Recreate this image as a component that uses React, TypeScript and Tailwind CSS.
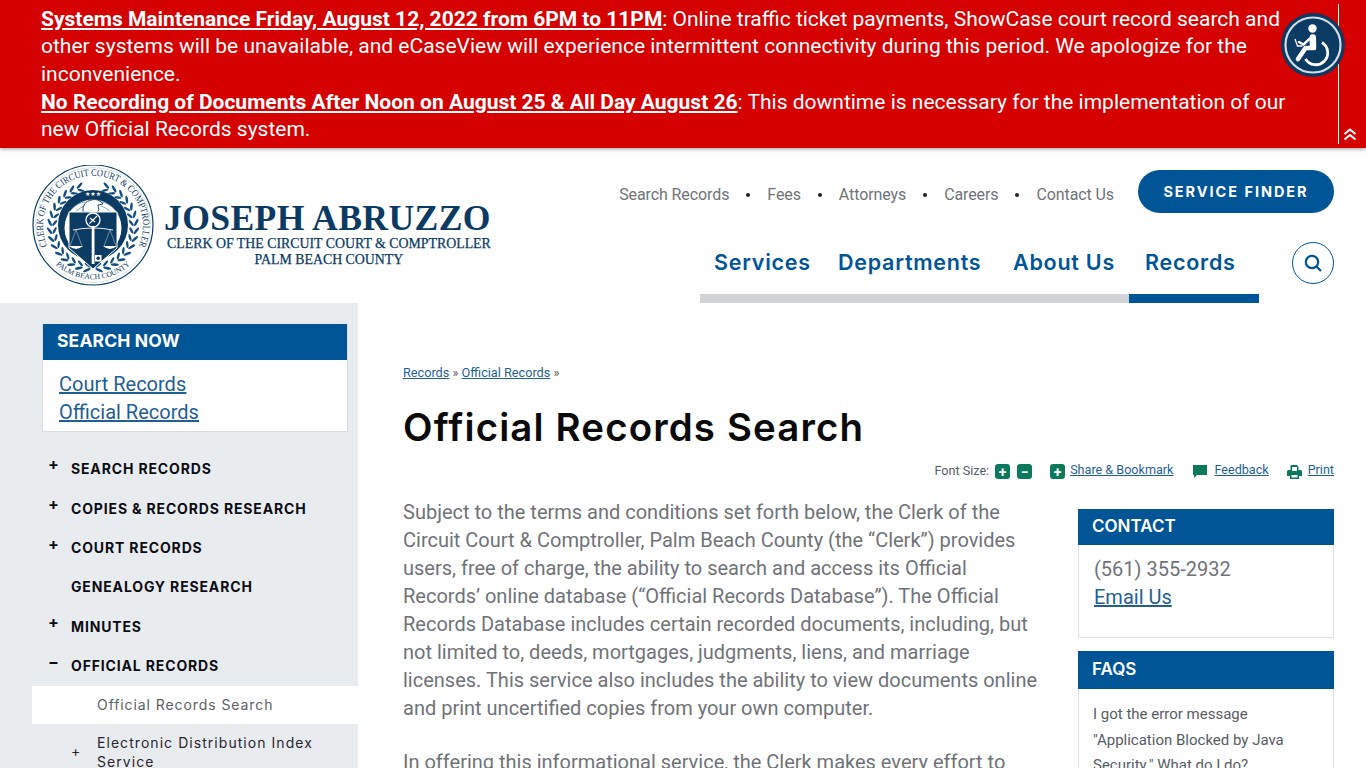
import React from 'react';

const sideItems = [
  { label: 'SEARCH RECORDS', mark: '+', h: 'h-[40px]' },
  { label: 'COPIES & RECORDS RESEARCH', mark: '+', h: 'h-[40px]' },
  { label: 'COURT RECORDS', mark: '+', h: 'h-[38px]' },
  { label: 'GENEALOGY RESEARCH', mark: '', h: 'h-[40px]' },
  { label: 'MINUTES', mark: '+', h: 'h-[40px]' },
  { label: 'OFFICIAL RECORDS', mark: '−', h: 'h-[38px]' },
];

const topLinks = ['Search Records', 'Fees', 'Attorneys', 'Careers', 'Contact Us'];

// wreath leaves, from the bottom of the seal up one side (mirrored for the other)
const leaves = Array.from({ length: 15 }, (_, i) => 8 + i * 11);

function Wreath() {
  return (
    <g fill="#14507f">
      {leaves.map((t) => {
        const rad = (t * Math.PI) / 180;
        const pos = (r: number) => [61 + r * Math.sin(rad), 62 + r * Math.cos(rad)];
        const [ox, oy] = pos(43.5);
        const [ix, iy] = pos(38.5);
        return (
          <g key={t}>
            <ellipse cx={ox} cy={oy} rx="4" ry="1.3" transform={`rotate(${-t + 32} ${ox} ${oy})`} />
            <ellipse cx={ix} cy={iy} rx="3.6" ry="1.2" transform={`rotate(${-t - 32} ${ix} ${iy})`} />
          </g>
        );
      })}
    </g>
  );
}

function Seal() {
  return (
    <svg width="124" height="122" viewBox="0 0 124 122" className="shrink-0">
      <defs>
        <path id="sealTop" d="M 15.5 81.5 A 50 50 0 1 1 106.5 81.5" />
        <path id="sealBottom" d="M 22 98 A 55 55 0 0 0 100 98" />
      </defs>
      <circle cx="61" cy="60" r="60" fill="#fff" stroke="#0b3a63" strokeWidth="1.2" />
      <circle cx="61" cy="60" r="57.5" fill="none" stroke="#b9c8d6" strokeWidth="0.5" />
      <text fontFamily="'Liberation Serif', serif" fontSize="9.8" fill="#0b3a63">
        <textPath href="#sealTop" startOffset="50%" textAnchor="middle" textLength="198" lengthAdjust="spacingAndGlyphs">CLERK OF THE CIRCUIT COURT &amp; COMPTROLLER</textPath>
      </text>
      <text fontFamily="'Liberation Serif', serif" fontSize="7.6" fill="#0b3a63">
        <textPath href="#sealBottom" startOffset="50%" textAnchor="middle">PALM BEACH COUNTY</textPath>
      </text>
      <Wreath />
      <g transform="translate(122 0) scale(-1 1)">
        <Wreath />
      </g>
      <circle cx="61" cy="60" r="35" fill="#0b3a63" />
      <circle cx="61" cy="63" r="28.5" fill="#fff" />
      {/* wing feathers */}
      <path d="M35 50 Q43 38 53 37 M38 54 Q45 43 53 41 M87 50 Q79 38 69 37 M84 54 Q77 43 69 41" stroke="#6f8ea8" strokeWidth="0.8" fill="none" />
      {/* eagle */}
      <path d="M51 47 Q50 37 59 35 Q67 33 71 39 L66 40 Q68 45 65 48 Z" fill="#fff" stroke="#0b3a63" strokeWidth="0.9" />
      {/* stars */}
      <text x="61" y="31" textAnchor="middle" fontSize="6" fill="#fff" fontFamily="'DejaVu Sans', sans-serif">★★★</text>
      {/* shield */}
      <path d="M37 47 H85 V83 L61 104 L37 83 Z" fill="#0b3a63" stroke="#fff" strokeWidth="1" />
      <circle cx="61" cy="55" r="7" fill="none" stroke="#fff" strokeWidth="1.3" />
      <path d="M57.5 58.5 L65 51 M58 53 L63 57" stroke="#fff" strokeWidth="1.1" />
      <path d="M41 65 Q61 61 81 65" stroke="#fff" strokeWidth="0.9" fill="none" />
      <path d="M44 65 L38 81 M44 65 L50 81 M78 65 L72 81 M78 65 L84 81" stroke="#c7d6e2" strokeWidth="0.5" />
      <path d="M37 81 H51 Q44 87 37 81 Z M71 81 H85 Q78 87 71 81 Z" fill="#fff" />
      <rect x="59.7" y="61" width="2.8" height="38" fill="#fff" />
      <rect x="63" y="90" width="6.5" height="6.5" fill="#fff" />
      <circle cx="66.2" cy="93.2" r="1.8" fill="#0b3a63" />
    </svg>
  );
}

function AccessIcon() {
  return (
    <svg width="64" height="64" viewBox="0 0 64 64" fill="none">
      <circle cx="32" cy="32" r="32" fill="#0b3a63" />
      <circle cx="32" cy="32" r="27.5" stroke="#d3dde6" strokeWidth="2.2" />
      <circle cx="31.5" cy="15.5" r="4.2" fill="#fff" />
      {/* torso and leg */}
      <path d="M31.8 24.5 L32 33" stroke="#fff" strokeWidth="6.5" strokeLinecap="round" />
      <path d="M33 35 H24.5 L17 46" stroke="#fff" strokeWidth="4.6" strokeLinejoin="round" strokeLinecap="round" />
      {/* arm and laptop */}
      <path d="M29 25.5 L22.5 31.5 L18 29" stroke="#fff" strokeWidth="2.4" strokeLinecap="round" />
      <path d="M14 26 L16.5 33 H21.5" stroke="#fff" strokeWidth="1.3" />
      {/* wheel */}
      <path d="M41 29.5 A12 12 0 1 1 24.5 46" stroke="#fff" strokeWidth="2.8" />
    </svg>
  );
}

function GreenBox({ children }: { children: React.ReactNode }) {
  return (
    <span className="flex h-[15px] w-[15px] items-center justify-center rounded-[3px] bg-[#0b7a5c] text-[14px] leading-none font-bold text-white">
      {children}
    </span>
  );
}

export default function App() {
  return (
    <div className="relative h-[768px] w-[1366px] overflow-hidden bg-white font-['Roboto',sans-serif]">
      {/* alert banner */}
      <div className="relative z-10 flex h-[148px] justify-between bg-[#d50000] pl-[41px] shadow-[0_1px_4px_rgba(0,0,0,0.4)]">
        <div className="w-[1250px] pt-[5.6px] text-[21px] leading-[27.7px] text-white">
          <p>
            <a className="font-bold underline">Systems Maintenance Friday, August 12, 2022 from 6PM to 11PM</a>: Online traffic ticket payments, ShowCase court record search and other systems will be unavailable, and eCaseView will experience intermittent connectivity during this period. We apologize for the inconvenience.
          </p>
          <p>
            <a className="font-bold underline">No Recording of Documents After Noon on August 25 &amp; All Day August 26</a>: This downtime is necessary for the implementation of our new Official Records system.
          </p>
        </div>
        <div className="mt-[4px] mr-[27px] mb-[4px] flex w-px items-end bg-white">
          <svg width="14" height="13" viewBox="0 0 14 13" className="mb-[3px] ml-[5px] shrink-0" fill="none" stroke="#fff" strokeWidth="2">
            <path d="M1.5 6 L7 1.5 L12.5 6 M1.5 11.5 L7 7 L12.5 11.5" />
          </svg>
        </div>
      </div>
      <div className="absolute top-[13px] left-[1281px] z-20">
        <AccessIcon />
      </div>

      {/* header */}
      <header className="flex h-[155px] justify-between pr-[32px] pl-[32px]">
        <div className="flex items-start pt-[17px]">
          <Seal />
          <div className="mt-[37px] ml-[8px] flex flex-col items-center font-['Liberation_Serif',serif] text-[#0b3a63]">
            <div className="text-[35.6px] leading-[33px] font-bold tracking-[0.4px] whitespace-nowrap">JOSEPH ABRUZZO</div>
            <div className="mt-[1px] ml-[3px] text-[13.85px] leading-[15px] whitespace-nowrap [-webkit-text-stroke:0.25px_#0b3a63]">CLERK OF THE CIRCUIT COURT &amp; COMPTROLLER</div>
            <div className="mt-[1px] ml-[3px] text-[13.85px] leading-[15px] whitespace-nowrap [-webkit-text-stroke:0.25px_#0b3a63]">PALM BEACH COUNTY</div>
          </div>
        </div>
        <div className="flex flex-col items-end">
          <div className="mt-[22px] flex items-center">
            <nav className="mt-[6px] flex items-center text-[16px] text-[#707378]">
              {topLinks.map((l, i) => (
                <React.Fragment key={l}>
                  {i > 0 && <span className="mx-[17px] h-[4px] w-[4px] rounded-full bg-[#222]" />}
                  <a className="tracking-[-0.1px] whitespace-nowrap">{l}</a>
                </React.Fragment>
              ))}
            </nav>
            <a className="ml-[24px] flex h-[43px] w-[196px] items-center justify-center rounded-full bg-[#005596] font-['Inter',sans-serif] text-[14.5px] font-bold tracking-[1.95px] text-white">
              SERVICE FINDER
            </a>
          </div>
          <div className="flex w-full justify-end">
            <nav className="mt-[36px] flex h-[54px] w-[559px] flex-col justify-between">
              <div className="flex pl-[14px] font-['Inter',sans-serif] text-[21.5px] leading-[26px] font-semibold tracking-[0.75px] text-[#005596]">
                <a className="w-[124px]">Services</a>
                <a className="w-[175px]">Departments</a>
                <a className="w-[132px]">About Us</a>
                <a>Records</a>
              </div>
              <div className="flex h-[9px] bg-[#d1d3d6]">
                <div className="ml-auto w-[130px] bg-[#005596]" />
              </div>
            </nav>
            <a className="mt-[29px] ml-[33px] flex h-[42px] w-[42px] items-center justify-center rounded-full border border-[#005596]">
              <svg width="20" height="20" viewBox="0 0 20 20" fill="none" stroke="#005596" strokeWidth="2.2">
                <circle cx="9" cy="9" r="6.2" />
                <path d="M13.5 13.5 L18 18" />
              </svg>
            </a>
          </div>
        </div>
      </header>

      <div className="flex">
        {/* left nav */}
        <aside className="h-[465px] w-[358px] shrink-0 bg-[#e9ecef] pt-[21px]">
          <div className="mr-[10px] ml-[42px] border border-[#d9dde1] bg-white">
            <h2 className="-mt-px ml-0 h-[36px] bg-[#005596] pl-[14px] font-['Inter',sans-serif] text-[17.5px] leading-[34px] font-bold tracking-[0.15px] text-white">SEARCH NOW</h2>
            <div className="h-[71px] pt-[10px] pl-[16px] text-[20px] leading-[28px] text-[#1f5f94] underline">
              <a className="block">Court Records</a>
              <a className="block">Official Records</a>
            </div>
          </div>
          <ul className="mt-[16px]">
            {sideItems.map((it) => (
              <li key={it.label} className={`relative flex items-center pl-[71px] font-['Inter',sans-serif] text-[14px] font-bold tracking-[0.85px] text-[#0c0c14] ${it.h}`}>
                <span className="absolute top-[6px] left-[48px] text-[16px] leading-[20px] font-bold">{it.mark}</span>
                {it.label}
              </li>
            ))}
          </ul>
          <div className="mt-[2px] ml-[32px] flex h-[38px] items-center bg-white pb-px pl-[65px] font-['Inter',sans-serif] text-[14px] tracking-[0.92px] text-[#5d6166]">
            Official Records Search
          </div>
          <div className="relative pt-[9px] pl-[97px] font-['Inter',sans-serif] text-[14px] leading-[19px] tracking-[1.05px] text-[#2a2530]">
            <span className="absolute top-[18px] left-[71px] text-[14px] leading-[18px]">+</span>
            Electronic Distribution Index
            <br />
            Service
          </div>
        </aside>

        {/* main content */}
        <main className="min-w-0 flex-1 pt-[62px] pr-[32px] pl-[45px]">
          <div className="text-[12.7px] leading-[16px] text-[#1f5f94]">
            <a className="underline">Records</a> <span className="text-[#555]">»</span> <a className="underline">Official Records</a> <span className="text-[#555]">»</span>
          </div>
          <h1 className="mt-[22px] font-['Inter',sans-serif] text-[38.4px] leading-[48px] font-semibold tracking-[1.15px] text-[#0a0a0a]">Official Records Search</h1>
          <div className="mt-[9px] flex h-[20px] items-center justify-end text-[12.6px] text-[#1f5f94]">
            <span className="mt-[3px] mr-[6px] text-[#555c66]">Font Size:</span>
            <span className="mt-[3px] mr-[7px]"><GreenBox>+</GreenBox></span>
            <span className="mt-[3px] mr-[18px]"><GreenBox>−</GreenBox></span>
            <span className="mt-[3px] mr-[5px]"><GreenBox>+</GreenBox></span>
            <a className="mr-[19px] underline">Share &amp; Bookmark</a>
            <svg width="16" height="15" viewBox="0 0 16 15" className="mt-[2px] mr-[6px]" fill="#0b7a5c">
              <path d="M1 1 H15 V11 H5 L2 14 V11 H1 Z" />
            </svg>
            <a className="mr-[18px] underline">Feedback</a>
            <svg width="15" height="14" viewBox="0 0 15 14" className="mt-[3px] mr-[6px]" fill="#0b7a5c">
              <path d="M4 0 H10 L11.5 2 V5 H13.5 Q15 5 15 6.5 V11 H12 V14 H3 V11 H0 V6.5 Q0 5 1.5 5 H3.5 V1 Z M5 6 H10 V2 H5 Z M4.5 10 V12.5 H10.5 V10 Z" fillRule="evenodd" />
            </svg>
            <a className="underline">Print</a>
          </div>
          <div className="mt-[18px] flex justify-between">
            <div className="w-[640px] text-[20px] leading-[28px] text-[#6f7378]">
              <p>
                Subject to the terms and conditions set forth below, the Clerk of the Circuit Court &amp; Comptroller, Palm Beach County (the “Clerk”) provides users, free of charge, the ability to search and access its Official Records’ online database (“Official Records Database”). The Official Records Database includes certain recorded documents, including, but not limited to, deeds, mortgages, judgments, liens, and marriage licenses. This service also includes the ability to view documents online and print uncertified copies from your own computer.
              </p>
              <p className="mt-[26px]">In offering this informational service, the Clerk makes every effort to</p>
            </div>
            <div className="mt-[11px] w-[256px] shrink-0">
              <section className="border border-t-0 border-[#dfe2e5]">
                <h3 className="-mx-px h-[36px] bg-[#005596] pl-[14px] font-['Inter',sans-serif] text-[17px] leading-[35px] font-semibold text-white">CONTACT</h3>
                <div className="h-[92px] pt-[10px] pl-[15px] text-[20px] leading-[28px] text-[#6f7378]">
                  <div>(561) 355-2932</div>
                  <a className="text-[#1f5f94] underline">Email Us</a>
                </div>
              </section>
              <section className="mt-[13px] border border-t-0 border-[#dfe2e5]">
                <h3 className="-mx-px h-[38px] bg-[#005596] pl-[14px] font-['Inter',sans-serif] text-[17px] leading-[37px] font-semibold text-white">FAQS</h3>
                <div className="pt-[13px] pl-[14px] text-[15px] leading-[25.5px] text-[#555c66]">
                  I got the error message
                  <br />
                  "Application Blocked by Java
                  <br />
                  Security." What do I do?
                </div>
              </section>
            </div>
          </div>
        </main>
      </div>
    </div>
  );
}
